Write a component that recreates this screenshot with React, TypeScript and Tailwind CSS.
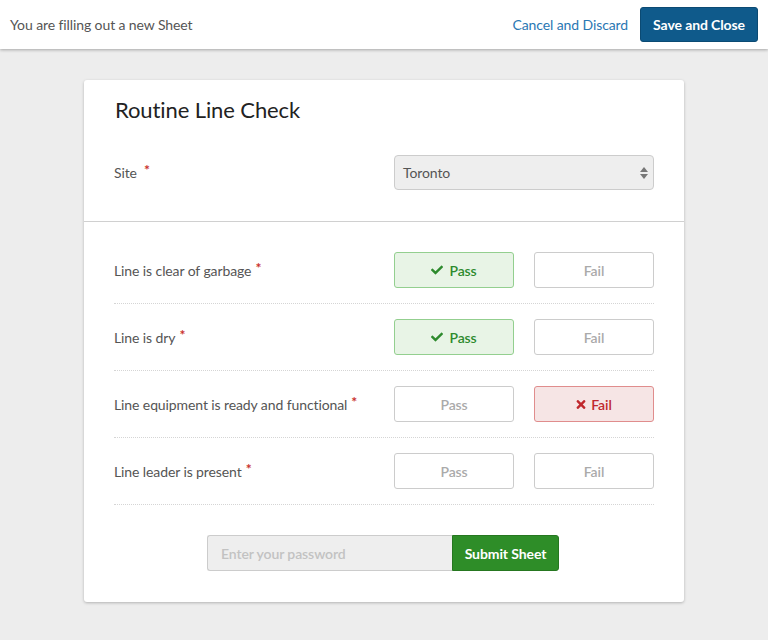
import React, { useState } from 'react';

type Result = 'pass' | 'fail' | null;

interface CheckItem {
  label: string;
  result: Result;
}

const items: CheckItem[] = [
  { label: 'Line is clear of garbage', result: 'pass' },
  { label: 'Line is dry', result: 'pass' },
  { label: 'Line equipment is ready and functional', result: 'fail' },
  { label: 'Line leader is present', result: null },
];

const CheckIcon = () => (
  <svg viewBox="0 0 512 512" className="w-[12px] h-[12px] mr-[6px] fill-current">
    <path d="M173.898 439.404l-166.4-166.4c-9.997-9.997-9.997-26.206 0-36.204l36.203-36.204c9.997-9.998 26.207-9.998 36.204 0L192 312.69 432.095 72.596c9.997-9.997 26.207-9.997 36.204 0l36.203 36.204c9.997 9.997 9.997 26.206 0 36.204l-294.4 294.401c-9.998 9.997-26.207 9.997-36.204-.001z" />
  </svg>
);

const TimesIcon = () => (
  <svg viewBox="0 0 352 512" className="w-[10px] h-[13px] mr-[5px] fill-current">
    <path d="M242.72 256l100.07-100.07c12.28-12.28 12.28-32.19 0-44.48l-22.24-22.240c-12.28-12.28-32.19-12.28-44.48 0L176 189.28 75.93 89.21c-12.28-12.28-32.19-12.28-44.48 0L9.21 111.45c-12.28 12.28-12.28 32.19 0 44.48L109.28 256 9.21 356.07c-12.28 12.28-12.28 32.19 0 44.48l22.24 22.24c12.28 12.28 32.2 12.28 44.48 0L176 322.72l100.07 100.07c12.28 12.28 32.2 12.28 44.48 0l22.24-22.24c12.28-12.28 12.28-32.19 0-44.48L242.72 256z" />
  </svg>
);

const Required = () => (
  <span className="text-[#c9302c] text-[14px] font-bold ml-[4px] relative -top-[3px]">*</span>
);

const App: React.FC = () => {
  const [results, setResults] = useState<Result[]>(items.map((i) => i.result));

  const setResult = (index: number, value: Result) => {
    setResults((prev) => prev.map((r, i) => (i === index ? value : r)));
  };

  return (
    <div className="min-h-[640px] bg-[#ededed] font-['Lato','Liberation_Sans',sans-serif] tracking-[-0.1px]">
      {/* top bar */}
      <div className="h-[49px] bg-white flex items-center justify-between pl-[10px] pr-[10px] shadow-[0_1px_3px_rgba(0,0,0,0.3)]">
        <span className="text-[14px] text-[#555]">You are filling out a new Sheet</span>
        <div className="flex items-center">
          <a className="text-[14px] text-[#2a77b3] mr-[12px] cursor-pointer">Cancel and Discard</a>
          <button className="h-[35px] px-[12px] rounded-[3px] bg-[#0f5a8b] border border-[#0b4a73] text-white text-[14px] font-bold">
            Save and Close
          </button>
        </div>
      </div>

      <div className="pt-[31px] pb-[38px] flex justify-center">
        <div className="w-[600px] bg-white rounded-[3px] shadow-[0_1px_3px_rgba(0,0,0,0.25)]">
          <div className="px-[30px] pt-[15px] pb-[31px] border-b border-[#d0d0d0]">
            <h1 className="text-[22px] leading-[30px] text-[#222] pl-[1px]">Routine Line Check</h1>
            <div className="mt-[30px] flex items-center justify-between">
              <label className="text-[14px] text-[#555]">
                Site
                <span className="ml-[3px]"><Required /></span>
              </label>
              <div className="w-[260px] h-[35px] bg-[#eee] border border-[#ccc] rounded-[4px] flex items-center justify-between pl-[8px] pr-[5px]">
                <span className="text-[14px] text-[#555]">Toronto</span>
                <svg viewBox="0 0 8 12" className="w-[8px] h-[12px] fill-[#777]">
                  <path d="M4 0 L8 5 L0 5 Z" />
                  <path d="M0 7 L8 7 L4 12 Z" />
                </svg>
              </div>
            </div>
          </div>

          <div className="px-[30px] pt-[15px] pb-[31px]">
            {items.map((item, index) => {
              const r = results[index];
              return (
                <div
                  key={item.label}
                  className="py-[15px] flex items-center justify-between border-b border-dotted border-[#d5d5d5]"
                >
                  <label className="text-[14px] text-[#555]">
                    {item.label}
                    <Required />
                  </label>
                  <div className="flex gap-[20px]">
                    <button
                      onClick={() => setResult(index, 'pass')}
                      className={
                        r === 'pass'
                          ? 'w-[120px] h-[36px] rounded-[3px] border border-[#93cf8f] bg-[#e8f4e6] text-[#2d8a2d] text-[14px] font-semibold flex items-center justify-center'
                          : 'w-[120px] h-[36px] rounded-[3px] border border-[#ccc] bg-white text-[#aaa] text-[14px] font-semibold flex items-center justify-center'
                      }
                    >
                      {r === 'pass' && <CheckIcon />}
                      Pass
                    </button>
                    <button
                      onClick={() => setResult(index, 'fail')}
                      className={
                        r === 'fail'
                          ? 'w-[120px] h-[36px] rounded-[3px] border border-[#e08d8d] bg-[#f6e5e5] text-[#c0282d] text-[14px] font-semibold flex items-center justify-center'
                          : 'w-[120px] h-[36px] rounded-[3px] border border-[#ccc] bg-white text-[#aaa] text-[14px] font-semibold flex items-center justify-center'
                      }
                    >
                      {r === 'fail' && <TimesIcon />}
                      Fail
                    </button>
                  </div>
                </div>
              );
            })}

            <div className="mt-[30px] flex justify-center pr-[2px]">
              <input
                type="password"
                placeholder="Enter your password"
                className="w-[245px] h-[36px] bg-[#eee] border border-[#ccc] border-r-0 rounded-l-[3px] px-[13px] text-[14px] font-semibold text-[#555] placeholder:text-[#c2c2c2] outline-none"
              />
              <button className="w-[107px] h-[36px] bg-[#2e8d28] border border-[#267720] rounded-r-[3px] text-white text-[14px] font-bold">
                Submit Sheet
              </button>
            </div>
          </div>
        </div>
      </div>
    </div>
  );
};

export default App;
